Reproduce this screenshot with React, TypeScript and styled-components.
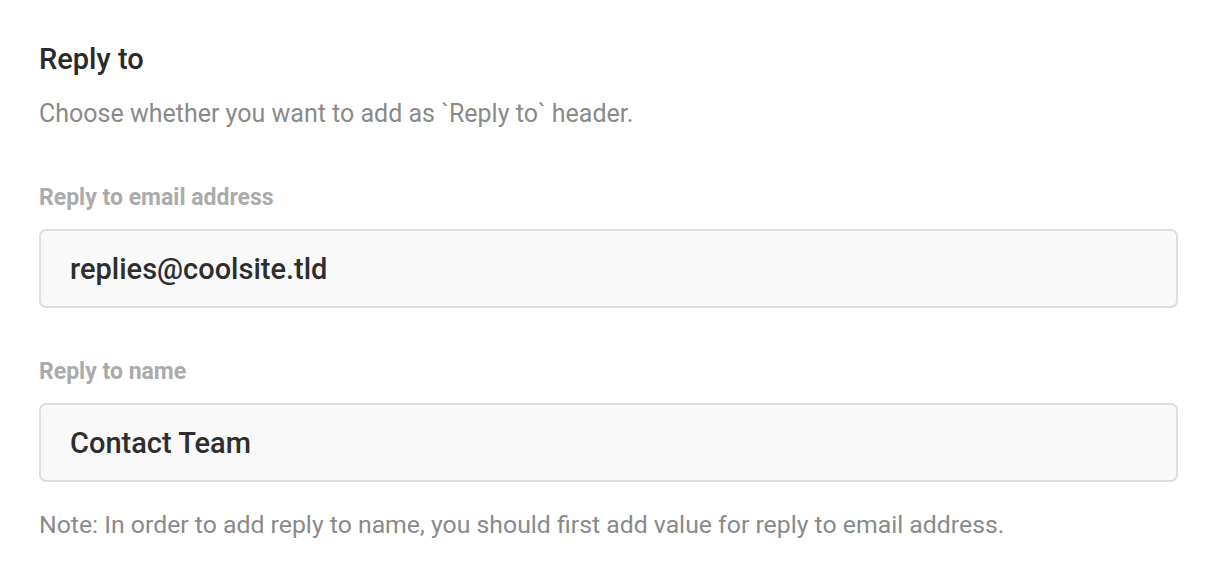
import React from "react";
import styled, { createGlobalStyle } from "styled-components";

const Global = createGlobalStyle`
  html, body { margin: 0; padding: 0; background: #ffffff; }
  body { font-family: Roboto, "Noto Sans", sans-serif; }
`;

const Section = styled.section`
  display: flex;
  flex-direction: column;
  padding: 41px 42px 0 39px;
`;

const Title = styled.h2`
  margin: 0;
  font-size: 29px;
  line-height: 36px;
  font-weight: 500;
  color: #2a2a2a;
`;

const Description = styled.p`
  margin: 21px 0 0;
  font-size: 25px;
  line-height: 32px;
  color: #8a8a8a;
`;

const Field = styled.div<{ $top: number }>`
  display: flex;
  flex-direction: column;
  margin-top: ${(p) => p.$top}px;
`;

const Label = styled.label`
  font-size: 23px;
  line-height: 30px;
  font-weight: 700;
  color: #ababab;
`;

const Input = styled.div`
  margin-top: 16px;
  box-sizing: border-box;
  height: 79px;
  display: flex;
  align-items: center;
  padding: 0 29px;
  background: #f9f9f9;
  border: 2px solid #dedede;
  border-radius: 7px;
  font-size: 29px;
  font-weight: 500;
  color: #2e2e2e;
`;

const Note = styled.p`
  margin: 27px 0 0;
  font-size: 24.8px;
  line-height: 32px;
  color: #8a8a8a;
`;

export default function App() {
  return (
    <>
      <Global />
      <Section>
        <Title>Reply to</Title>
        <Description>Choose whether you want to add as `Reply to` header.</Description>
        <Field $top={53}>
          <Label>Reply to email address</Label>
          <Input>replies@coolsite.tld</Input>
        </Field>
        <Field $top={49}>
          <Label>Reply to name</Label>
          <Input>Contact Team</Input>
        </Field>
        <Note>Note: In order to add reply to name, you should first add value for reply to email address.</Note>
      </Section>
    </>
  );
}
